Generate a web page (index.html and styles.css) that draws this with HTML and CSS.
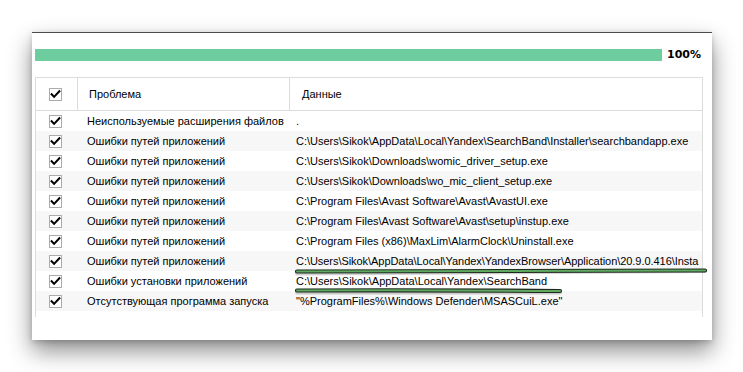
FILE: index.html
```html
<!DOCTYPE html>
<html lang="ru">
<head>
<meta charset="utf-8">
<link rel="stylesheet" href="styles.css">
</head>
<body>
<div class="stage">
  <div class="window">
    <div class="progress">
      <div class="bar"></div>
      <span class="pct">100%</span>
    </div>
    <div class="table">
      <div class="head">
        <div class="c1"><span class="cb"><svg viewBox="0 0 13 13"><path d="M2.6 6.2 L5.1 8.9 L10.4 3.2"/></svg></span></div>
        <div class="c2">Проблема</div>
        <div class="c3">Данные</div>
      </div>
      <div class="row">
        <div class="c1"><span class="cb"><svg viewBox="0 0 13 13"><path d="M2.6 6.2 L5.1 8.9 L10.4 3.2"/></svg></span></div>
        <div class="c2">Неиспользуемые расширения файлов</div>
        <div class="c3">.</div>
      </div>
      <div class="row">
        <div class="c1"><span class="cb"><svg viewBox="0 0 13 13"><path d="M2.6 6.2 L5.1 8.9 L10.4 3.2"/></svg></span></div>
        <div class="c2">Ошибки путей приложений</div>
        <div class="c3">C:\Users\Sikok\AppData\Local\Yandex\SearchBand\Installer\searchbandapp.exe</div>
      </div>
      <div class="row">
        <div class="c1"><span class="cb"><svg viewBox="0 0 13 13"><path d="M2.6 6.2 L5.1 8.9 L10.4 3.2"/></svg></span></div>
        <div class="c2">Ошибки путей приложений</div>
        <div class="c3">C:\Users\Sikok\Downloads\womic_driver_setup.exe</div>
      </div>
      <div class="row">
        <div class="c1"><span class="cb"><svg viewBox="0 0 13 13"><path d="M2.6 6.2 L5.1 8.9 L10.4 3.2"/></svg></span></div>
        <div class="c2">Ошибки путей приложений</div>
        <div class="c3">C:\Users\Sikok\Downloads\wo_mic_client_setup.exe</div>
      </div>
      <div class="row">
        <div class="c1"><span class="cb"><svg viewBox="0 0 13 13"><path d="M2.6 6.2 L5.1 8.9 L10.4 3.2"/></svg></span></div>
        <div class="c2">Ошибки путей приложений</div>
        <div class="c3">C:\Program Files\Avast Software\Avast\AvastUI.exe</div>
      </div>
      <div class="row">
        <div class="c1"><span class="cb"><svg viewBox="0 0 13 13"><path d="M2.6 6.2 L5.1 8.9 L10.4 3.2"/></svg></span></div>
        <div class="c2">Ошибки путей приложений</div>
        <div class="c3">C:\Program Files\Avast Software\Avast\setup\instup.exe</div>
      </div>
      <div class="row">
        <div class="c1"><span class="cb"><svg viewBox="0 0 13 13"><path d="M2.6 6.2 L5.1 8.9 L10.4 3.2"/></svg></span></div>
        <div class="c2">Ошибки путей приложений</div>
        <div class="c3">C:\Program Files (x86)\MaxLim\AlarmClock\Uninstall.exe</div>
      </div>
      <div class="row">
        <div class="c1"><span class="cb"><svg viewBox="0 0 13 13"><path d="M2.6 6.2 L5.1 8.9 L10.4 3.2"/></svg></span></div>
        <div class="c2">Ошибки путей приложений</div>
        <div class="c3 tight">C:\Users\Sikok\AppData\Local\Yandex\YandexBrowser\Application\20.9.0.416\Insta</div>
      </div>
      <div class="row">
        <div class="c1"><span class="cb"><svg viewBox="0 0 13 13"><path d="M2.6 6.2 L5.1 8.9 L10.4 3.2"/></svg></span></div>
        <div class="c2">Ошибки установки приложений</div>
        <div class="c3">C:\Users\Sikok\AppData\Local\Yandex\SearchBand</div>
      </div>
      <div class="row">
        <div class="c1"><span class="cb"><svg viewBox="0 0 13 13"><path d="M2.6 6.2 L5.1 8.9 L10.4 3.2"/></svg></span></div>
        <div class="c2">Отсутствующая программа запуска</div>
        <div class="c3">"%ProgramFiles%\Windows Defender\MSASCuiL.exe"</div>
      </div>
    </div>
    <svg class="marks" width="680" height="308" viewBox="0 0 680 308">
      <g class="shadow">
        <path d="M265 240.5 Q420 239 673 238"/>
        <path d="M265 259.5 Q400 259 528 259.5"/>
      </g>
      <g class="outline">
        <path d="M265 238.5 Q420 237.5 673 237.5"/>
        <path d="M265 257.5 Q400 257 528 258"/>
      </g>
      <g class="fill">
        <path d="M265 238.5 Q420 237.5 673 237.5"/>
        <path d="M265 257.5 Q400 257 528 258"/>
      </g>
    </svg>
  </div>
</div>
</body>
</html>
```

FILE: styles.css
```css
html, body {
  margin: 0;
  padding: 0;
  background: #ffffff;
}

.stage {
  padding: 32px 0 0 32px;
  width: 743px;
  height: 372px;
  box-sizing: border-box;
  overflow: hidden;
}

.window {
  position: relative;
  width: 680px;
  height: 308px;
  box-sizing: border-box;
  background: #ffffff;
  border-top: 1px solid #4a4a4a;
  box-shadow: 0 11px 22px rgba(0, 0, 0, 0.45), 0 2px 6px rgba(0, 0, 0, 0.18);
  padding: 16px 0 0 3px;
  overflow: hidden;
  font-family: "Liberation Sans", Arial, sans-serif;
  font-size: 11px;
  color: #000;
}

.progress {
  display: flex;
  align-items: center;
  height: 12px;
  gap: 5px;
}

.bar {
  width: 627px;
  height: 12px;
  background: #6ecd9e;
}

.pct {
  font-family: "DejaVu Sans", sans-serif;
  font-weight: bold;
  font-size: 11px;
  line-height: 12px;
  color: #000;
}

.table {
  margin-top: 16px;
  width: 668px;
  height: 240px;
  box-sizing: border-box;
  border: 1px solid #dcdcdc;
  border-bottom: none;
}

.head {
  display: grid;
  grid-template-columns: 42px 212px 1fr;
  height: 33px;
  border-bottom: 1px solid #dcdcdc;
  box-sizing: border-box;
}

.head .c1 {
  border-right: 1px solid #dcdcdc;
  display: flex;
  align-items: center;
  padding-left: 13px;
}

.head .c2 {
  border-right: 1px solid #dcdcdc;
  padding-left: 11px;
  line-height: 32px;
}

.head .c3 {
  padding-left: 12px;
  line-height: 32px;
}

.row {
  display: grid;
  grid-template-columns: 42px 212px 1fr;
  height: 20px;
  line-height: 20px;
}

.row:nth-child(odd) {
  background: #f7f7f7;
}

.row .c1 {
  display: flex;
  align-items: center;
  padding-left: 13px;
}

.row .c2 {
  padding-left: 9px;
  white-space: nowrap;
}

.row .c3 {
  padding-left: 6px;
  white-space: nowrap;
  overflow: hidden;
}

.row .c3.tight {
  letter-spacing: -0.05px;
}

.cb {
  display: block;
  width: 13px;
  height: 13px;
  box-sizing: border-box;
  border: 1px solid #ababab;
  background: #fff;
  position: relative;
}

.cb svg {
  position: absolute;
  left: -1px;
  top: -1px;
  width: 13px;
  height: 13px;
}

.cb path {
  fill: none;
  stroke: #000;
  stroke-width: 2;
  stroke-linecap: square;
  stroke-linejoin: miter;
}

.marks {
  position: absolute;
  left: 0;
  top: 0;
  pointer-events: none;
}

.marks path {
  fill: none;
  stroke-linecap: round;
}

.marks .shadow path {
  stroke: rgba(0, 0, 0, 0.18);
  stroke-width: 4;
}

.marks .outline path {
  stroke: #1f2a1f;
  stroke-width: 4.2;
}

.marks .fill path {
  stroke: #5ea860;
  stroke-width: 2;
}
```
